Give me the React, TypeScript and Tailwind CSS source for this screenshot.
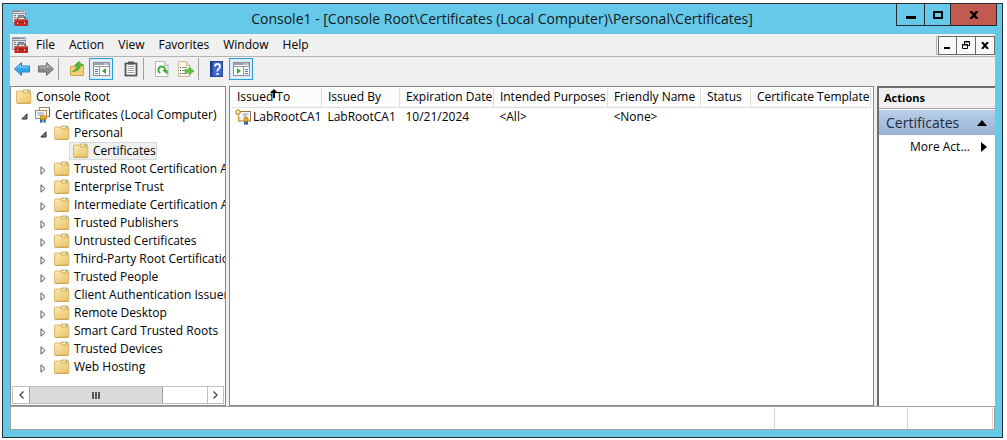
import type { ReactNode } from 'react';

function ConsoleIcon() {
  return (
    <svg width="16" height="16" viewBox="0 0 16 16" className="shrink-0" aria-hidden="true">
      <rect x="0.500" y="0.500" width="13" height="12" fill="#dfe4e9" stroke="#a0a7af" />
      <path d="M1 1.500h12" stroke="#c4cad1" />
      <path d="M1 1.500h7M9 1.500h1M11 1.500h1" stroke="#757d86" />
      <path d="M0 3.500h14" stroke="#8b929b" />
      <path d="M2 5.500h2M2 7.500h2M2 9.500h1M6 5.500h6" stroke="#6f7882" />
      <path d="M5 9.500L6.500 7h6L14 9.500" fill="none" stroke="#3c3f44" strokeWidth="1.200" />
      <path d="M3 9.500h13V16H2.500v-5.500z" fill="#c22a26" />
      <path d="M3 9.700h13" stroke="#dd5b54" />
      <path d="M2.500 12.200h13.500" stroke="#971b18" strokeWidth=".8" />
      <rect x="5" y="12" width="1.200" height="2" fill="#e8a09b" />
      <rect x="12" y="12" width="1.200" height="2" fill="#e8a09b" />
    </svg>
  );
}

function FolderIcon() {
  return (
    <svg width="16" height="16" viewBox="0 0 16 16" className="shrink-0" aria-hidden="true">
      <defs>
        <linearGradient id="folder" x1="0" y1="0" x2="0.800" y2="1">
          <stop offset="0" stopColor="#fbe9b2" />
          <stop offset="1" stopColor="#eac66d" />
        </linearGradient>
      </defs>
      <path d="M7 4V2q0-1 1-1h5q1.500 0 1.500 1.500V6H7z" fill="#f0d588" stroke="#c9a24c" strokeWidth=".8" />
      <path d="M8.500 2.500h3.500" stroke="#fffdf2" />
      <path d="M11.500 2.500H13" stroke="#5f9fd0" />
      <path d="M.5 3q0-1 1-1H6q1 0 1.300 1l.4 1h6.300q.8 0 .8.800v8.700q0 .8-.8.800H1.300q-.8 0-.8-.8z" fill="url(#folder)" stroke="#d2ab55" strokeWidth=".8" />
      <path d="M1 14.400h13.500" stroke="#c39a44" strokeWidth=".8" />
    </svg>
  );
}

function CertStackIcon() {
  return (
    <svg width="16" height="16" viewBox="0 0 16 16" className="shrink-0" aria-hidden="true">
      <rect x="4.500" y="0.500" width="10" height="9" fill="#fffdf5" stroke="#a58c5c" />
      <path d="M14.500 1v9" stroke="#6c5a35" />
      <rect x="0.500" y="3.500" width="11" height="8" fill="#f4f7fb" stroke="#a38b5d" />
      <path d="M2.500 6h6M2.500 8h4" stroke="#8596b8" />
      <path d="M5 11v5l1.200-.8 1.300.8v-5zM8.500 11v5l1.200-.8 1 .8v-5z" fill="#2166c4" />
      <circle cx="7.800" cy="10.500" r="2.500" fill="#f0aa1c" stroke="#b97508" strokeWidth=".7" />
    </svg>
  );
}

function CertKeyIcon() {
  return (
    <svg width="16" height="16" viewBox="0 0 16 16" className="shrink-0" aria-hidden="true">
      <rect x="3.500" y="2.500" width="12" height="9.500" fill="#f6f8fc" stroke="#8f7748" />
      <path d="M8 5h5.500M8 7h4" stroke="#8795b8" />
      <circle cx="3" cy="3" r="2.200" fill="#fdf0c8" stroke="#cf9a35" strokeWidth="1.300" />
      <path d="M3.500 5.500V12.500M3.500 9.500h2M3.500 12h2" stroke="#dcaa48" strokeWidth="1.500" />
      <path d="M9 11v5l1.200-.8 1.300.8.500-.8 1 .8v-5z" fill="#2166c4" />
      <circle cx="11" cy="10.500" r="2.300" fill="#f0aa1c" stroke="#b97508" strokeWidth=".7" />
    </svg>
  );
}

function ArrowIcon({ forward }: { forward?: boolean }) {
  return (
    <svg width="18" height="16" viewBox="0 0 18 16" aria-hidden="true" className={forward ? '-scale-x-100' : ''}>
      <path
        d="M1.500 8L8.500 1.500v3.500h8v6h-8v3.500z"
        fill={forward ? '#8c8c8c' : '#33a5e8'}
        stroke={forward ? '#6c6c6c' : '#2a80c4'}
        strokeLinejoin="round"
      />
      <path d="M3.500 7.500L7.500 4v2.200h8" fill="none" stroke={forward ? '#c0c0c0' : '#8ad6fa'} />
    </svg>
  );
}

function UpFolderIcon() {
  return (
    <svg width="16" height="16" viewBox="0 0 16 16" aria-hidden="true">
      <path d="M1.500 5.500h5l1-2h7v11h-13z" fill="#f2d37c" stroke="#cba54e" />
      <path d="M2 7h12v7H2z" fill="#f0cf7a" />
      <path d="M3.500 10.500Q7.500 9 8 4.500H5.500L10 .5l4 4h-2.500Q11 10 3.500 10.500z" fill="#58bd34" stroke="#3a9a24" strokeWidth=".7" />
    </svg>
  );
}

function TreePaneIcon({ right }: { right?: boolean }) {
  return (
    <svg width="17" height="16" viewBox="0 0 17 16" aria-hidden="true" className={right ? '-scale-x-100' : ''}>
      <rect x="0.500" y="1.500" width="16" height="13" fill="#fff" stroke="#8b939c" />
      <path d="M1 3h15" stroke="#9aa2ab" strokeWidth="2" />
      <path d="M1 5.500h15M6.500 6v8" stroke="#8b939c" />
      <path d={right ? 'M2 3h1.500M4.500 3H6' : 'M11 3h1.500M13.500 3H15'} stroke="#fff" />
      <path d="M2 8.500h3M2 10.500h3M2 12.500h3" stroke="#4b7ab3" />
      <path d="M13 7v6l-4-3z" fill="#35ac2c" />
    </svg>
  );
}

function ClipboardIcon() {
  return (
    <svg width="14" height="16" viewBox="0 0 14 16" aria-hidden="true">
      <rect x="1.500" y="2.500" width="11" height="12" fill="#fff" stroke="#555" strokeWidth="1.800" />
      <rect x="4" y="0.500" width="6" height="3" fill="#555" />
      <path d="M3.500 5.500h7M3.500 7.500h7M3.500 9.500h7M3.500 11.500h7" stroke="#a0a0a0" />
    </svg>
  );
}

function RefreshIcon() {
  return (
    <svg width="14" height="16" viewBox="0 0 14 16" aria-hidden="true">
      <path d="M.5.500h9l3.500 4v11H.5z" fill="#fdfdfd" stroke="#b5b5b5" />
      <path d="M9.500.500v4H13" fill="#e4e4e4" stroke="#b5b5b5" />
      <path d="M5.300 12A3.400 3.400 0 1 1 10.200 9" fill="none" stroke="#37ae38" strokeWidth="1.900" />
      <path d="M7 9h5.500v4.500z" fill="#37ae38" />
    </svg>
  );
}

function ExportIcon() {
  return (
    <svg width="16" height="16" viewBox="0 0 16 16" aria-hidden="true">
      <path d="M.5.500h8l3.500 4v11H.5z" fill="#fdf8df" stroke="#c4bb9a" />
      <path d="M8.500.500v4H12" fill="#eee5bf" stroke="#c4bb9a" />
      <path d="M2 6.500h1M2 9.500h1M2 12.500h1" stroke="#333" />
      <path d="M4 6.500h5M4 9.500h3M4 12.500h5" stroke="#8a8fa8" />
      <path d="M7 8.500h4V6l5 4-5 4v-2.500H7z" fill="#5ec340" stroke="#4aa838" strokeWidth=".6" />
    </svg>
  );
}

function HelpIcon() {
  return (
    <svg width="14" height="16" viewBox="0 0 14 16" aria-hidden="true">
      <rect x="0.500" y="0.500" width="12" height="15" fill="#3f68cc" stroke="#2a4596" />
      <path d="M1.500 1v14" stroke="#203787" strokeWidth="2" />
      <path d="M5 5.500Q5 3 7.500 3T10 5.500Q10 7 8.500 8T7.500 10.500" fill="none" stroke="#fff" strokeWidth="1.800" />
      <rect x="6.500" y="12" width="2" height="2" fill="#fff" />
    </svg>
  );
}

function ToolButton({ label, active, children }: { label: string; active?: boolean; children: ReactNode }) {
  return (
    <button
      type="button"
      aria-label={label}
      className={
        active
          ? 'flex h-[22px] w-6 items-center justify-center border border-[#26a0da] bg-[#dcebf7]'
          : 'flex h-[22px] w-6 items-center justify-center'
      }
    >
      {children}
    </button>
  );
}

function ToolSeparator() {
  return <span className="mr-1.5 h-[22px] w-px bg-[#a0a0a0]" />;
}

type Node = { label: string; level: number; state?: 'open' | 'closed'; cert?: boolean; selected?: boolean };

const nodes: Node[] = [
  { label: 'Console Root', level: 0 },
  { label: 'Certificates (Local Computer)', level: 1, state: 'open', cert: true },
  { label: 'Personal', level: 2, state: 'open' },
  { label: 'Certificates', level: 3, selected: true },
  { label: 'Trusted Root Certification Authorities', level: 2, state: 'closed' },
  { label: 'Enterprise Trust', level: 2, state: 'closed' },
  { label: 'Intermediate Certification Authorities', level: 2, state: 'closed' },
  { label: 'Trusted Publishers', level: 2, state: 'closed' },
  { label: 'Untrusted Certificates', level: 2, state: 'closed' },
  { label: 'Third-Party Root Certification Authorities', level: 2, state: 'closed' },
  { label: 'Trusted People', level: 2, state: 'closed' },
  { label: 'Client Authentication Issuers', level: 2, state: 'closed' },
  { label: 'Remote Desktop', level: 2, state: 'closed' },
  { label: 'Smart Card Trusted Roots', level: 2, state: 'closed' },
  { label: 'Trusted Devices', level: 2, state: 'closed' },
  { label: 'Web Hosting', level: 2, state: 'closed' },
];

const indents = ['pl-px', 'pl-1', 'pl-[23px]', 'pl-[42px]'];

function TreeRow({ node }: { node: Node }) {
  return (
    <li
      role="treeitem"
      aria-level={node.level + 1}
      aria-selected={!!node.selected}
      className={`flex h-[18px] items-center ${indents[node.level]}`}
    >
      {node.level > 0 && (
        <span className="flex w-4 shrink-0 justify-center pl-0.5 pt-0.5">
          {node.state === 'open' && (
            <svg width="7" height="7" viewBox="0 0 7 7" aria-hidden="true">
              <path d="M6 .8V6H.8z" fill="#777" stroke="#333" />
            </svg>
          )}
          {node.state === 'closed' && (
            <svg width="6" height="9" viewBox="0 0 6 9" aria-hidden="true">
              <path d="M1 .8v7.400l4-3.700z" fill="#fff" stroke="#555" />
            </svg>
          )}
        </span>
      )}
      <button
        type="button"
        className={`flex h-[18px] items-center gap-1 whitespace-nowrap border pl-[3px] ${
          node.selected ? 'border-[#dadada] bg-[#f0f0f0]' : 'border-transparent'
        }`}
      >
        {node.cert ? <CertStackIcon /> : <FolderIcon />}
        <span>{node.label}</span>
      </button>
    </li>
  );
}

const columns = [
  { label: 'Issued To', width: 'w-[90px]', value: 'LabRootCA1' },
  { label: 'Issued By', width: 'w-[78px]', value: 'LabRootCA1' },
  { label: 'Expiration Date', width: 'w-[94px]', value: '10/21/2024' },
  { label: 'Intended Purposes', width: 'w-[114px]', value: '<All>' },
  { label: 'Friendly Name', width: 'w-[93px]', value: '<None>' },
  { label: 'Status', width: 'w-[50px]', value: '' },
  { label: 'Certificate Template', width: 'w-[120px]', value: '' },
];

function TitleBar() {
  return (
    <header className="flex h-[30px] items-start">
      <div className="flex w-[105px] pl-[9px] pt-1.5">
        <ConsoleIcon />
      </div>
      <h1 className="flex-1 whitespace-nowrap pt-[3px] text-center text-[14px] leading-6 text-[#101820]">
        Console1 - [Console Root\Certificates (Local Computer)\Personal\Certificates]
      </h1>
      <div className="mr-[5px] flex h-[22px] divide-x divide-[#262a2e] border border-t-0 border-[#262a2e]">
        <button type="button" aria-label="Minimize" className="flex w-7 items-center justify-center">
          <svg width="10" height="8" viewBox="0 0 10 8" aria-hidden="true">
            <path d="M0 6.500h10" stroke="#000" strokeWidth="3" />
          </svg>
        </button>
        <button type="button" aria-label="Maximize" className="flex w-[26px] items-center justify-center">
          <svg width="10" height="8" viewBox="0 0 10 8" aria-hidden="true">
            <rect x="1" y="1" width="8" height="6" fill="none" stroke="#000" strokeWidth="2" />
          </svg>
        </button>
        <button type="button" aria-label="Close" className="flex w-[45px] items-center justify-center bg-[#c35a50]">
          <svg width="10" height="8" viewBox="0 0 10 8" aria-hidden="true">
            <path d="M1.500 0L8.500 8M8.500 0L1.500 8" stroke="#000" strokeWidth="2.400" />
          </svg>
        </button>
      </div>
    </header>
  );
}

function MenuBar() {
  return (
    <div className="flex h-[23px] items-center border-b border-[#b4b4b4]">
      <div className="flex w-[19px] pl-0.5">
        <ConsoleIcon />
      </div>
      <nav className="flex flex-1 gap-3.5 pl-[7px]">
        {['File', 'Action', 'View', 'Favorites', 'Window', 'Help'].map((m) => (
          <button type="button" key={m}>
            {m}
          </button>
        ))}
      </nav>
      <div className="flex border-l border-[#b4b4b4] pl-px">
        <button type="button" aria-label="Minimize child" className="flex h-[19px] w-[19px] items-center justify-center border border-[#6a6a6a] bg-[#f8f8f8]">
          <svg width="7" height="8" viewBox="0 0 7 8" aria-hidden="true">
            <path d="M0 7h6" stroke="#000" strokeWidth="2" />
          </svg>
        </button>
        <button type="button" aria-label="Restore child" className="flex h-[19px] w-[19px] items-center justify-center border border-l-0 border-[#6a6a6a] bg-[#f8f8f8]">
          <svg width="8" height="8" viewBox="0 0 8 8" aria-hidden="true">
            <path d="M2.500 3V.5h5v4H6M2 1h6" fill="none" stroke="#000" />
            <path d="M.5 3.500h5v4h-5zM0 4h6" fill="none" stroke="#000" />
          </svg>
        </button>
        <button type="button" aria-label="Close child" className="flex h-[19px] w-[19px] items-center justify-center border border-l-0 border-[#6a6a6a] bg-[#f8f8f8]">
          <svg width="8" height="7" viewBox="0 0 8 7" aria-hidden="true">
            <path d="M1 0l6 7M7 0L1 7" stroke="#000" strokeWidth="2" />
          </svg>
        </button>
      </div>
    </div>
  );
}

function Toolbar() {
  return (
    <div className="flex h-[29px] items-start pt-px">
      <ToolButton label="Back">
        <ArrowIcon />
      </ToolButton>
      <ToolButton label="Forward">
        <ArrowIcon forward />
      </ToolButton>
      <ToolSeparator />
      <ToolButton label="Up one level">
        <UpFolderIcon />
      </ToolButton>
      <ToolButton label="Show or hide console tree" active>
        <TreePaneIcon />
      </ToolButton>
      <span className="w-1.5" />
      <ToolButton label="Properties">
        <ClipboardIcon />
      </ToolButton>
      <ToolSeparator />
      <ToolButton label="Refresh">
        <RefreshIcon />
      </ToolButton>
      <ToolButton label="Export list">
        <ExportIcon />
      </ToolButton>
      <ToolSeparator />
      <ToolButton label="Help">
        <HelpIcon />
      </ToolButton>
      <ToolButton label="Show or hide action pane" active>
        <TreePaneIcon right />
      </ToolButton>
    </div>
  );
}

function TreeScrollbar() {
  return (
    <div className="mx-px mb-px flex h-[18px] border border-[#c0c0c0]">
      <button type="button" aria-label="Scroll left" className="flex w-4 items-center justify-center">
        <svg width="5" height="8" viewBox="0 0 5 8" aria-hidden="true">
          <path d="M4.500.500L1 4l3.500 3.500" fill="none" stroke="#555" strokeWidth="1.500" />
        </svg>
      </button>
      <div className="flex flex-1">
        <div className="flex w-3/4 items-center justify-center gap-px border-x border-[#a0a0a0] bg-[#dadada]">
          <span className="h-[7px] w-0.5 bg-[#555]" />
          <span className="h-[7px] w-0.5 bg-[#555]" />
          <span className="h-[7px] w-0.5 bg-[#555]" />
        </div>
      </div>
      <button type="button" aria-label="Scroll right" className="flex w-4 items-center justify-center border-l border-[#c0c0c0]">
        <svg width="5" height="8" viewBox="0 0 5 8" aria-hidden="true">
          <path d="M.5.500L4 4 .5 7.500" fill="none" stroke="#555" strokeWidth="1.500" />
        </svg>
      </button>
    </div>
  );
}

function CertificateList() {
  return (
    <section className="min-w-0 flex-1 overflow-hidden border border-[#828790] bg-white p-px">
      <table className="table-fixed border-collapse whitespace-nowrap text-left">
        <thead>
          <tr className="h-[19px]">
            {columns.map((c, i) => (
              <th
                key={c.label}
                scope="col"
                className={`relative border-b border-r border-[#dedede] bg-[#fcfcfc] p-0 pl-1.5 font-normal ${c.width}`}
              >
                {c.label}
                {i === 0 && (
                  <svg width="8" height="9" viewBox="0 0 8 9" aria-hidden="true" className="absolute left-[39px] top-px">
                    <path d="M4 0l4 4H0zM3 4h2v5H3z" fill="#000" />
                  </svg>
                )}
              </th>
            ))}
          </tr>
        </thead>
        <tbody>
          <tr className="h-[19px]">
            {columns.map((c, i) => (
              <td key={c.label} className={i === 0 ? 'p-0 pl-1' : 'p-0 pl-1.5'}>
                {i === 0 ? (
                  <span className="flex items-center gap-0.5">
                    <CertKeyIcon />
                    {c.value}
                  </span>
                ) : (
                  c.value
                )}
              </td>
            ))}
          </tr>
        </tbody>
      </table>
    </section>
  );
}

function ActionsPane() {
  return (
    <aside className="flex w-[118px] flex-col border-l-2 border-t-2 border-[#6d6d6d] bg-white">
      <h2 className="h-[21px] border-b border-[#a0a0a0] bg-[#f0f0f0] pl-[5px] text-[11px] font-bold leading-5">Actions</h2>
      <button
        type="button"
        className="mt-px flex h-[25px] items-center justify-between bg-linear-to-b from-[#b9cfe9] to-[#98b2d4] pl-[7px] pr-2 text-[14px] text-[#1c2a3e]"
      >
        Certificates
        <svg width="10" height="6" viewBox="0 0 10 6" aria-hidden="true">
          <path d="M5 0l5 6H0z" fill="#000" />
        </svg>
      </button>
      <button type="button" className="flex h-6 items-center justify-between pl-[31px] pr-2">
        More Act...
        <svg width="6" height="10" viewBox="0 0 6 10" aria-hidden="true">
          <path d="M0 0v10l6-5z" fill="#000" />
        </svg>
      </button>
    </aside>
  );
}

export default function App() {
  return (
    <div className="flex min-h-screen bg-white pb-0.5 pl-0.5 pr-1 pt-[3px] font-['Open_Sans','Noto_Sans',sans-serif] text-[12px] leading-[18px] text-black">
      <div className="flex min-w-0 flex-1 flex-col border border-[#2b2f38] bg-[#66c9ea]">
        <TitleBar />
        <div className="mx-[7px] mb-[7px] flex flex-1 flex-col bg-[#f0f0f0]">
          <MenuBar />
          <Toolbar />
          <main className="flex flex-1 gap-[3px]">
            <nav aria-label="Console tree" className="flex w-[216px] flex-col border border-[#828790] bg-white pt-px">
              <ul role="tree" className="flex-1 overflow-hidden">
                {nodes.map((n, i) => (
                  <TreeRow key={i} node={n} />
                ))}
              </ul>
              <TreeScrollbar />
            </nav>
            <CertificateList />
            <ActionsPane />
          </main>
          <footer className="flex h-6 border border-[#a0a0a0] bg-white pt-px">
            <div className="flex-1 border-r border-[#d7d7d7]" />
            <div className="w-[133px] border-r border-[#d7d7d7]" />
            <div className="mr-px w-[85px] border-r border-[#d7d7d7]" />
          </footer>
        </div>
      </div>
    </div>
  );
}
